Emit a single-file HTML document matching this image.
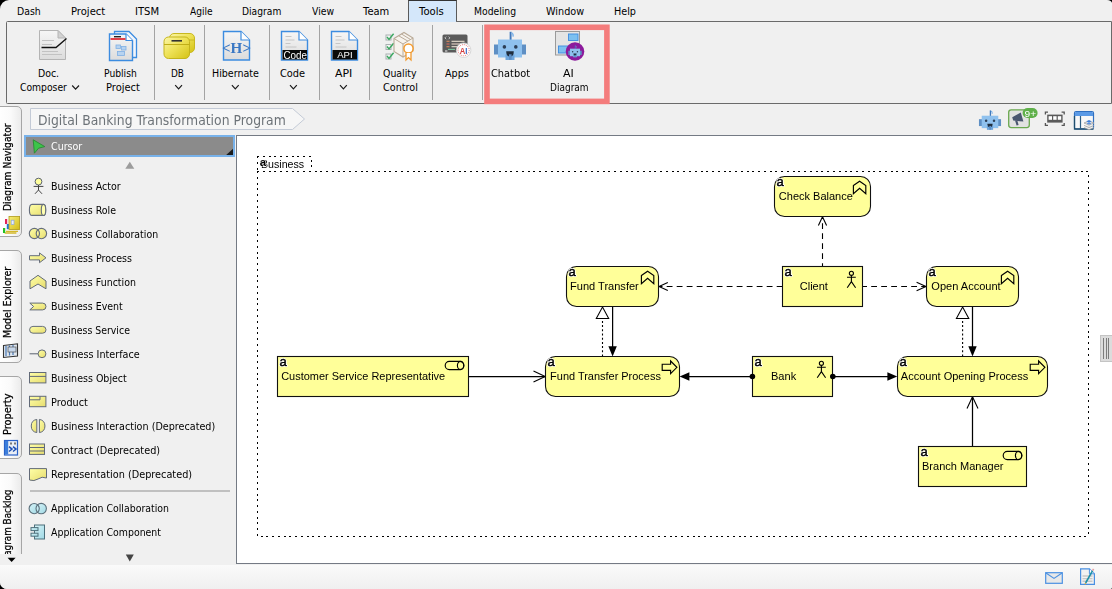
<!DOCTYPE html>
<html>
<head>
<meta charset="utf-8">
<title>Digital Banking Transformation Program</title>
<style>
html,body{margin:0;padding:0;background:#000;}
body{width:1112px;height:589px;overflow:hidden;font-family:"Liberation Sans",sans-serif;}
#root{position:relative;width:1112px;height:589px;background:#f0f0f0;overflow:hidden;border-radius:9px 5px 2px 7px / 9px 3px 2px 7px;}
.abs{position:absolute;}
svg{position:absolute;overflow:visible;transform:translateZ(0);}
svg text{font-family:"Liberation Sans",sans-serif;}
</style>
</head>
<body>
<div id="root">
<div class="abs" style="left:408px;top:0px;width:49px;height:22px;background:#d4e7fa;border:1px solid #5a5a5a;border-top:1px solid #333;border-bottom:none;box-sizing:border-box;"></div>
<span style="position:absolute;left:17.30px;top:5.20px;line-height:14px;height:14px;white-space:nowrap;font-family:'DejaVu Sans','Liberation Sans',sans-serif;font-size:11px;color:#000;transform:scaleX(0.8488);transform-origin:0 50%;">Dash</span>
<span style="position:absolute;left:71.20px;top:5.20px;line-height:14px;height:14px;white-space:nowrap;font-family:'DejaVu Sans','Liberation Sans',sans-serif;font-size:11px;color:#000;transform:scaleX(0.9086);transform-origin:0 50%;">Project</span>
<span style="position:absolute;left:135.30px;top:5.20px;line-height:14px;height:14px;white-space:nowrap;font-family:'DejaVu Sans','Liberation Sans',sans-serif;font-size:11px;color:#000;transform:scaleX(0.9116);transform-origin:0 50%;">ITSM</span>
<span style="position:absolute;left:189.60px;top:5.20px;line-height:14px;height:14px;white-space:nowrap;font-family:'DejaVu Sans','Liberation Sans',sans-serif;font-size:11px;color:#000;transform:scaleX(0.8251);transform-origin:0 50%;">Agile</span>
<span style="position:absolute;left:242.00px;top:5.20px;line-height:14px;height:14px;white-space:nowrap;font-family:'DejaVu Sans','Liberation Sans',sans-serif;font-size:11px;color:#000;transform:scaleX(0.8320);transform-origin:0 50%;">Diagram</span>
<span style="position:absolute;left:311.50px;top:5.20px;line-height:14px;height:14px;white-space:nowrap;font-family:'DejaVu Sans','Liberation Sans',sans-serif;font-size:11px;color:#000;transform:scaleX(0.8426);transform-origin:0 50%;">View</span>
<span style="position:absolute;left:363.30px;top:5.20px;line-height:14px;height:14px;white-space:nowrap;font-family:'DejaVu Sans','Liberation Sans',sans-serif;font-size:11px;color:#000;transform:scaleX(0.9045);transform-origin:0 50%;">Team</span>
<span style="position:absolute;left:419.40px;top:5.20px;line-height:14px;height:14px;white-space:nowrap;font-family:'DejaVu Sans','Liberation Sans',sans-serif;font-size:11px;color:#000;transform:scaleX(0.9148);transform-origin:0 50%;">Tools</span>
<span style="position:absolute;left:474.10px;top:5.20px;line-height:14px;height:14px;white-space:nowrap;font-family:'DejaVu Sans','Liberation Sans',sans-serif;font-size:11px;color:#000;transform:scaleX(0.8412);transform-origin:0 50%;">Modeling</span>
<span style="position:absolute;left:546.40px;top:5.20px;line-height:14px;height:14px;white-space:nowrap;font-family:'DejaVu Sans','Liberation Sans',sans-serif;font-size:11px;color:#000;transform:scaleX(0.8784);transform-origin:0 50%;">Window</span>
<span style="position:absolute;left:614.00px;top:5.20px;line-height:14px;height:14px;white-space:nowrap;font-family:'DejaVu Sans','Liberation Sans',sans-serif;font-size:11px;color:#000;transform:scaleX(0.8773);transform-origin:0 50%;">Help</span>
<div class="abs" style="left:6px;top:21px;width:1106px;height:83px;border:1px solid #6a6a6a;box-sizing:border-box;border-radius:1.5px 0 0 1.5px;"></div>
<div class="abs" style="left:409px;top:21px;width:47px;height:1px;background:#d4e7fa;"></div>
<div class="abs" style="left:154px;top:25px;width:1px;height:75px;background:#a3a3a3;"></div>
<div class="abs" style="left:204px;top:25px;width:1px;height:75px;background:#a3a3a3;"></div>
<div class="abs" style="left:269px;top:25px;width:1px;height:75px;background:#a3a3a3;"></div>
<div class="abs" style="left:319px;top:25px;width:1px;height:75px;background:#a3a3a3;"></div>
<div class="abs" style="left:369px;top:25px;width:1px;height:75px;background:#a3a3a3;"></div>
<div class="abs" style="left:432px;top:25px;width:1px;height:75px;background:#a3a3a3;"></div>
<div class="abs" style="left:482px;top:25px;width:1px;height:75px;background:#a3a3a3;"></div>
<svg width="140" height="90" viewBox="480 20 140 90" style="left:480px;top:20px"><rect x="487" y="27.3" width="119.9" height="74.1" fill="none" stroke="#f47c7c" stroke-width="5.6"/></svg>
<span style="position:absolute;left:38.20px;top:67.00px;line-height:14px;height:14px;white-space:nowrap;font-family:'DejaVu Sans','Liberation Sans',sans-serif;font-size:11px;color:#000;transform:scaleX(0.8525);transform-origin:0 50%;">Doc.</span>
<span style="position:absolute;left:19.90px;top:81.00px;line-height:14px;height:14px;white-space:nowrap;font-family:'DejaVu Sans','Liberation Sans',sans-serif;font-size:11px;color:#000;transform:scaleX(0.8396);transform-origin:0 50%;">Composer</span>
<span style="position:absolute;left:104.40px;top:67.00px;line-height:14px;height:14px;white-space:nowrap;font-family:'DejaVu Sans','Liberation Sans',sans-serif;font-size:11px;color:#000;transform:scaleX(0.8363);transform-origin:0 50%;">Publish</span>
<span style="position:absolute;left:105.50px;top:81.00px;line-height:14px;height:14px;white-space:nowrap;font-family:'DejaVu Sans','Liberation Sans',sans-serif;font-size:11px;color:#000;transform:scaleX(0.9006);transform-origin:0 50%;">Project</span>
<span style="position:absolute;left:171.40px;top:67.00px;line-height:14px;height:14px;white-space:nowrap;font-family:'DejaVu Sans','Liberation Sans',sans-serif;font-size:11px;color:#000;transform:scaleX(0.8109);transform-origin:0 50%;">DB</span>
<span style="position:absolute;left:212.40px;top:67.00px;line-height:14px;height:14px;white-space:nowrap;font-family:'DejaVu Sans','Liberation Sans',sans-serif;font-size:11px;color:#000;transform:scaleX(0.8653);transform-origin:0 50%;">Hibernate</span>
<span style="position:absolute;left:280.40px;top:67.00px;line-height:14px;height:14px;white-space:nowrap;font-family:'DejaVu Sans','Liberation Sans',sans-serif;font-size:11px;color:#000;transform:scaleX(0.8910);transform-origin:0 50%;">Code</span>
<span style="position:absolute;left:334.50px;top:67.00px;line-height:14px;height:14px;white-space:nowrap;font-family:'DejaVu Sans','Liberation Sans',sans-serif;font-size:11px;color:#000;transform:scaleX(0.9939);transform-origin:0 50%;">API</span>
<span style="position:absolute;left:382.70px;top:67.00px;line-height:14px;height:14px;white-space:nowrap;font-family:'DejaVu Sans','Liberation Sans',sans-serif;font-size:11px;color:#000;transform:scaleX(0.8547);transform-origin:0 50%;">Quality</span>
<span style="position:absolute;left:382.70px;top:81.00px;line-height:14px;height:14px;white-space:nowrap;font-family:'DejaVu Sans','Liberation Sans',sans-serif;font-size:11px;color:#000;transform:scaleX(0.8776);transform-origin:0 50%;">Control</span>
<span style="position:absolute;left:444.80px;top:67.00px;line-height:14px;height:14px;white-space:nowrap;font-family:'DejaVu Sans','Liberation Sans',sans-serif;font-size:11px;color:#000;transform:scaleX(0.8739);transform-origin:0 50%;">Apps</span>
<span style="position:absolute;left:490.70px;top:67.00px;line-height:14px;height:14px;white-space:nowrap;font-family:'DejaVu Sans','Liberation Sans',sans-serif;font-size:11px;color:#000;transform:scaleX(0.8917);transform-origin:0 50%;">Chatbot</span>
<span style="position:absolute;left:563.00px;top:67.00px;line-height:14px;height:14px;white-space:nowrap;font-family:'DejaVu Sans','Liberation Sans',sans-serif;font-size:11px;color:#000;transform:scaleX(1.0017);transform-origin:0 50%;">AI</span>
<span style="position:absolute;left:550.40px;top:81.00px;line-height:14px;height:14px;white-space:nowrap;font-family:'DejaVu Sans','Liberation Sans',sans-serif;font-size:11px;color:#000;transform:scaleX(0.8172);transform-origin:0 50%;">Diagram</span>
<svg width="1112" height="135" viewBox="0 0 1112 135" style="left:0;top:0">
<defs>
<linearGradient id="gPage" x1="0" y1="0" x2="0" y2="1"><stop offset="0" stop-color="#f6f6f6"/><stop offset="1" stop-color="#dcdcdc"/></linearGradient>
<linearGradient id="gDb" x1="0" y1="0" x2="1" y2="1"><stop offset="0" stop-color="#fbf6a8"/><stop offset=".45" stop-color="#efe35a"/><stop offset="1" stop-color="#d4c214"/></linearGradient>
<linearGradient id="gY" x1="0" y1="0" x2="1" y2="1"><stop offset="0" stop-color="#ffffa8"/><stop offset="1" stop-color="#e6dc6e"/></linearGradient>
<linearGradient id="gC" x1="0" y1="0" x2="1" y2="1"><stop offset="0" stop-color="#d8f4f8"/><stop offset="1" stop-color="#9fd8e4"/></linearGradient>
</defs>
<polyline points="72.19999999999999,85.5 75.6,89.1 79.0,85.5" fill="none" stroke="#1a1a1a" stroke-width="1.2"/>
<polyline points="175.2,85.2 178.6,88.8 182.0,85.2" fill="none" stroke="#1a1a1a" stroke-width="1.2"/>
<polyline points="231.9,85.2 235.3,88.8 238.70000000000002,85.2" fill="none" stroke="#1a1a1a" stroke-width="1.2"/>
<polyline points="290.0,85.2 293.4,88.8 296.79999999999995,85.2" fill="none" stroke="#1a1a1a" stroke-width="1.2"/>
<polyline points="340.0,85.2 343.4,88.8 346.79999999999995,85.2" fill="none" stroke="#1a1a1a" stroke-width="1.2"/>
<g>
<path d="M39.5,30.5 H58 L65.5,38 V59.5 H39.5 Z" fill="url(#gPage)" stroke="#b4b4b4"/>
<path d="M58,30.5 V38 H65.5 Z" fill="#d2d2d2" stroke="#b4b4b4"/>
<path d="M42,40.5 H54 M42,44.5 H52 M42,51.5 H58 M42,54.5 H62" stroke="#c2c2c2" stroke-width="1" fill="none"/>
<path d="M41.5,47.5 H56 L66.5,38.5" stroke="#111" stroke-width="1.4" fill="none"/>
</g>
<g>
<path d="M114.5,31.5 H129 L136.5,39 V57.5 H114.5 Z" fill="#f3f6fb" stroke="#3c8ce0" stroke-width="1.3"/>
<path d="M109.5,34 H126 L132.5,40.5 V60.5 H109.5 Z" fill="url(#gPage)" stroke="#3c8ce0" stroke-width="1.4"/>
<path d="M126,34 V40.5 H132.5" fill="#fff" stroke="#3c8ce0" stroke-width="1.2"/>
<rect x="110.5" y="38" width="15" height="2" fill="#e0414b"/>
<rect x="114" y="36" width="7" height="1.4" fill="#222"/>
<rect x="116" y="45" width="4.5" height="3.5" fill="#b7d3f0" stroke="#7fb0e4" stroke-width=".8"/>
<rect x="121.5" y="46.5" width="4.5" height="3.5" fill="#b7d3f0" stroke="#7fb0e4" stroke-width=".8"/>
<rect x="117.5" y="51.5" width="7" height="4" fill="#b7d3f0" stroke="#7fb0e4" stroke-width=".8"/>
</g>
<g>
<rect x="169.5" y="33.5" width="25" height="19" rx="4.5" fill="url(#gDb)" stroke="#c8b820"/>
<path d="M169.5,40 H194.5" stroke="#c8b820"/>
<rect x="164" y="37" width="25.5" height="21.5" rx="4.5" fill="url(#gDb)" stroke="#c4b41c"/>
<path d="M164,44.5 H189.5" stroke="#c0ae18"/>
<rect x="171.5" y="40" width="10.5" height="1.6" fill="#333"/>
</g>
<g>
<path d="M223.5,31.5 H241 L249.5,40 V60 H223.5 Z" fill="url(#gPage)" stroke="#3c8ce0" stroke-width="1.4"/>
<path d="M241,31.5 V40 H249.5" fill="#fff" stroke="#3c8ce0" stroke-width="1.2"/>
<text x="236.5" y="52.8" text-anchor="middle" font-size="15" font-weight="bold" fill="#3b78c4" style="font-family:'Liberation Serif',serif" textLength="29" lengthAdjust="spacingAndGlyphs">&lt;H&gt;</text>
</g>
<g>
<path d="M281.5,31.5 H299.0 L307.5,40 V60 H281.5 Z" fill="url(#gPage)" stroke="#3c8ce0" stroke-width="1.4"/>
<path d="M299.0,31.5 V40 H307.5" fill="#fff" stroke="#3c8ce0" stroke-width="1.2"/>
<path d="M285.5,36.5 H291.5 M285.5,40 H294.5 M285.5,43.5 H290.5 M285.5,47 H296.5" stroke="#c6c6c6" fill="none"/>
<rect x="282.5" y="50" width="24.5" height="9.5" fill="#0a0a0a"/>
<text x="283.4" y="58.6" font-size="10.5" fill="#fff" textLength="23.6" lengthAdjust="spacingAndGlyphs">Code</text>
</g>
<g>
<path d="M331.5,31.5 H349.0 L357.5,40 V60 H331.5 Z" fill="url(#gPage)" stroke="#3c8ce0" stroke-width="1.4"/>
<path d="M349.0,31.5 V40 H357.5" fill="#fff" stroke="#3c8ce0" stroke-width="1.2"/>
<path d="M335.5,36.5 H341.5 M335.5,40 H344.5 M335.5,43.5 H340.5 M335.5,47 H346.5" stroke="#c6c6c6" fill="none"/>
<rect x="332.5" y="50" width="24.5" height="9.5" fill="#0a0a0a"/>
<text x="337.2" y="58.2" font-size="9.5" fill="#fff" textLength="15.4" lengthAdjust="spacingAndGlyphs">API</text>
</g>
<g>
<g fill="#f4f4f4" stroke="#a8b0b0" stroke-width="1"><rect x="386" y="35" width="5" height="5"/><rect x="386" y="44.5" width="5" height="5"/><rect x="386" y="54" width="5" height="5"/></g>
<g fill="none" stroke="#3aa860" stroke-width="1.4"><path d="M387,37 l2,2.4 l4.6,-5.6"/><path d="M387,46.5 l2,2.4 l4.6,-5.6"/><path d="M387,56 l2,2.4 l4.6,-5.6"/></g>
<path d="M394,38.5 L404,32.5 L413,38 V51 L403,57 L394,51.5 Z" fill="#f7f3ee" stroke="#b9aa98" stroke-width="1.1"/>
<path d="M394,38.5 L403,44 L413,38 M403,44 V57 M398.5,35.7 L408,41.2 M401.5,34 L410.5,39.5" fill="none" stroke="#b9aa98" stroke-width="1"/>
<circle cx="408.5" cy="48.5" r="4.6" fill="#fff" stroke="#f29a2e" stroke-width="1.5"/>
<path d="M406,53 V60 L408.5,57.6 L411,60 V53" fill="#fff" stroke="#f29a2e" stroke-width="1.3"/>
</g>
<g>
<rect x="442.5" y="34.5" width="25" height="18" rx="1.5" fill="#5a5a5a"/>
<path d="M446.2,36.6 l-1.3,1.3 l1.3,1.3 M448.6,36.6 l1.3,1.3 l-1.3,1.3" stroke="#eee" stroke-width=".7" fill="none"/>
<path d="M446.5,41.3 h3" stroke="#d98a5c" stroke-width="1.1"/><path d="M451.5,41.3 h13" stroke="#e9dfd0" stroke-width="1.1"/>
<path d="M446.5,44 h3" stroke="#d9665c" stroke-width="1.1"/><path d="M451.5,44 h11" stroke="#e9d6c8" stroke-width="1.1"/>
<path d="M446.5,46.7 h3" stroke="#d98a5c" stroke-width="1.1"/><path d="M451.5,46.7 h8" stroke="#e9dfd0" stroke-width="1.1"/>
<path d="M448,49.4 h7" stroke="#7cc8a0" stroke-width="1.1"/>
<path d="M445,51 h2.4" stroke="#eee" stroke-width="1"/>
<circle cx="463.6" cy="50.2" r="7.3" fill="#fff" stroke="#cfcfcf" stroke-width=".8"/>
<circle cx="463.6" cy="50.2" r="5.6" fill="none" stroke="#e05050" stroke-width=".8" stroke-dasharray="1 1"/>
<text x="463.6" y="53.5" text-anchor="middle" font-size="8.6" font-weight="bold" textLength="7.6" lengthAdjust="spacingAndGlyphs"><tspan fill="#d43c3c">A</tspan><tspan fill="#2c5fc4">I</tspan></text>
</g>
<g transform="translate(510,31.5) scale(1.0)"><path d="M0.6,0.3 V8.5" stroke="#3f78bc" stroke-width="1.9" fill="none"/><path d="M1.4,1.6 q2.2,0.4 1.6,3.6" stroke="#7db3e8" stroke-width="1.5" fill="none"/><rect x="-16" y="13" width="5" height="10" fill="#5e8fc4"/><rect x="11" y="13" width="5" height="10" fill="#5e8fc4"/><rect x="-12" y="8" width="24" height="18" fill="#8fc1ee"/><rect x="-4.5" y="23" width="9" height="5.5" fill="#6ea6dc"/><circle cx="-5.6" cy="15.4" r="1.8" fill="#2c3e55"/><circle cx="5.8" cy="15.4" r="1.8" fill="#2c3e55"/><path d="M-3.8,19.8 H3.8 Q3.8,25 0,25 Q-3.8,25 -3.8,19.8 Z" fill="#1f2d3d"/><rect x="-1" y="22.8" width="2.6" height="5.5" fill="#5e8fc4"/></g>
<g>
<rect x="555.5" y="31.5" width="24" height="23.5" fill="#e4e4e4" stroke="#9a9a9a"/>
<rect x="568.5" y="34" width="9.5" height="6.5" fill="#7cc0f0" stroke="#3c8ce0" stroke-width=".9"/>
<rect x="558.5" y="46" width="9.5" height="7" fill="#7cc0f0" stroke="#3c8ce0" stroke-width=".9"/>
<circle cx="575" cy="51.5" r="9.3" fill="#8c1a9c"/>
</g>
<g transform="translate(575,45.3) scale(0.42)"><path d="M0.6,0.3 V8.5" stroke="#3f78bc" stroke-width="1.9" fill="none"/><path d="M1.4,1.6 q2.2,0.4 1.6,3.6" stroke="#7db3e8" stroke-width="1.5" fill="none"/><rect x="-16" y="13" width="5" height="10" fill="#5e8fc4"/><rect x="11" y="13" width="5" height="10" fill="#5e8fc4"/><rect x="-12" y="8" width="24" height="18" fill="#8fc1ee"/><rect x="-4.5" y="23" width="9" height="5.5" fill="#6ea6dc"/><circle cx="-5.6" cy="15.4" r="1.8" fill="#2c3e55"/><circle cx="5.8" cy="15.4" r="1.8" fill="#2c3e55"/><path d="M-3.8,19.8 H3.8 Q3.8,25 0,25 Q-3.8,25 -3.8,19.8 Z" fill="#1f2d3d"/><rect x="-1" y="22.8" width="2.6" height="5.5" fill="#5e8fc4"/></g>
<g transform="translate(990,110.2) scale(0.69)"><path d="M0.6,0.3 V8.5" stroke="#3f78bc" stroke-width="1.9" fill="none"/><path d="M1.4,1.6 q2.2,0.4 1.6,3.6" stroke="#7db3e8" stroke-width="1.5" fill="none"/><rect x="-16" y="13" width="5" height="10" fill="#5e8fc4"/><rect x="11" y="13" width="5" height="10" fill="#5e8fc4"/><rect x="-12" y="8" width="24" height="18" fill="#8fc1ee"/><rect x="-4.5" y="23" width="9" height="5.5" fill="#6ea6dc"/><circle cx="-5.6" cy="15.4" r="1.8" fill="#2c3e55"/><circle cx="5.8" cy="15.4" r="1.8" fill="#2c3e55"/><path d="M-3.8,19.8 H3.8 Q3.8,25 0,25 Q-3.8,25 -3.8,19.8 Z" fill="#1f2d3d"/><rect x="-1" y="22.8" width="2.6" height="5.5" fill="#5e8fc4"/></g>
<g>
<rect x="1008.7" y="109.8" width="20.6" height="17.8" rx="2.5" fill="#e2e2e2" stroke="#6aa84f" stroke-width="1.3"/>
<path d="M1012.2,117.3 L1020.8,112.4 L1023.4,121.6 L1013.2,120.4 Z" fill="#4a5670"/>
<path d="M1015,120.6 L1016.6,125.6 L1018.6,125 L1017.4,120.8 Z" fill="#4a5670"/>
<rect x="1022.6" y="108" width="15" height="10" rx="5" fill="#5fb04a"/>
<text x="1030.3" y="116.5" text-anchor="middle" font-size="8.6" fill="#fff" textLength="11.6" lengthAdjust="spacingAndGlyphs">9+</text>
</g>
<g fill="none" stroke="#555" stroke-width="1.3">
<path d="M1045.4,114.5 V112.2 H1048 M1061.6,112.2 H1064.2 V114.5 M1064.2,123 V125.4 H1061.6 M1048,125.4 H1045.4 V123"/>
<rect x="1047.2" y="114.6" width="15.4" height="8" fill="#5a5a5a" stroke="none"/>
<g fill="#fff" stroke="none"><rect x="1048.6" y="116.2" width="3.4" height="3.6"/><rect x="1053.2" y="116.2" width="3.4" height="3.6"/><rect x="1057.8" y="116.2" width="3.4" height="3.6"/></g>
</g>
<g>
<rect x="1074.5" y="111.5" width="19" height="17.5" rx="1.5" fill="#f8f8f8" stroke="#2f6fc0" stroke-width="1.2"/>
<path d="M1075,116 V113 Q1075,112 1076,112 H1092 Q1093,112 1093,113 V116 Z" fill="#5b9ae6"/>
<path d="M1074.5,116 V129 H1093.5" fill="none" stroke="#1f4e6e" stroke-width="1.3"/>
<path d="M1080.5,116 V129" stroke="#2f5f86" stroke-width="1.2"/>
<path d="M1084,123 l5,-2.2 l5,2.2 l-5,2.2 z M1084,125.4 l5,2.2 l5,-2.2 M1084,127.6 l5,2.2 l5,-2.2" fill="#e8e8e8" stroke="#9a9a9a" stroke-width=".7"/>
<path d="M1086.8,121.4 l2.2,-1 l2.2,1 l-2.2,1 z M1086.8,123.2 l2.2,1 l2.2,-1" fill="#3c7edc" stroke="#3c7edc" stroke-width=".6"/>
</g>
</svg>
<svg width="320" height="30" viewBox="0 105 320 30" style="left:0;top:105px">
<path d="M30.5,108.5 H292.5 L304.5,119 L292.5,129.5 H30.5 Z" fill="#f6f6f6" stroke="#c3cad6" stroke-width="1"/>
</svg>
<span style="position:absolute;left:37.60px;top:111.00px;line-height:18px;height:18px;white-space:nowrap;font-family:'DejaVu Sans','Liberation Sans',sans-serif;font-size:14px;color:#6d7378;transform:scaleX(0.8860);transform-origin:0 50%;">Digital Banking Transformation Program</span>
<div class="abs" style="left:0;top:100px;width:24px;height:454px;overflow:hidden;">
<div class="abs" style="left:-3px;top:6px;width:25px;height:131px;box-sizing:border-box;border:1px solid #a6a6a6;border-radius:0 5px 5px 0;background:linear-gradient(90deg,#ffffff,#fafafa 55%,#ebebeb);"></div>
<div class="abs" style="left:-3px;top:150px;width:25px;height:113px;box-sizing:border-box;border:1px solid #a6a6a6;border-radius:0 5px 5px 0;background:linear-gradient(90deg,#ffffff,#fafafa 55%,#ebebeb);"></div>
<div class="abs" style="left:-3px;top:276px;width:25px;height:83.39999999999998px;box-sizing:border-box;border:1px solid #a6a6a6;border-radius:0 5px 5px 0;background:linear-gradient(90deg,#ffffff,#fafafa 55%,#ebebeb);"></div>
<div class="abs" style="left:-3px;top:373px;width:25px;height:127px;box-sizing:border-box;border:1px solid #a6a6a6;border-radius:0 5px 5px 0;background:linear-gradient(90deg,#ffffff,#fafafa 55%,#ebebeb);"></div>
<span style="position:absolute;left:1.40px;top:111.00px;line-height:14px;height:14px;white-space:nowrap;font-family:'DejaVu Sans','Liberation Sans',sans-serif;font-size:11px;color:#000;transform:rotate(-90deg) scaleX(0.8378);transform-origin:0 0;-webkit-text-stroke:0.25px #000;">Diagram Navigator</span>
<span style="position:absolute;left:1.40px;top:238.20px;line-height:14px;height:14px;white-space:nowrap;font-family:'DejaVu Sans','Liberation Sans',sans-serif;font-size:11px;color:#000;transform:rotate(-90deg) scaleX(0.8648);transform-origin:0 0;-webkit-text-stroke:0.25px #000;">Model Explorer</span>
<span style="position:absolute;left:1.40px;top:334.50px;line-height:14px;height:14px;white-space:nowrap;font-family:'DejaVu Sans','Liberation Sans',sans-serif;font-size:11px;color:#000;transform:rotate(-90deg) scaleX(0.8916);transform-origin:0 0;-webkit-text-stroke:0.25px #000;">Property</span>
<span style="position:absolute;left:1.40px;top:465.00px;line-height:14px;height:14px;white-space:nowrap;font-family:'DejaVu Sans','Liberation Sans',sans-serif;font-size:11px;color:#000;transform:rotate(-90deg) scaleX(0.8004);transform-origin:0 0;-webkit-text-stroke:0.25px #000;">Diagram Backlog</span>
<svg width="24" height="454" viewBox="0 100 24 454" style="left:0;top:0">
<defs><linearGradient id="gDb2" x1="0" y1="0" x2="1" y2="1"><stop offset="0" stop-color="#f6ee7a"/><stop offset="1" stop-color="#d4bc14"/></linearGradient></defs>
<g>
<path d="M6,231.4 H18 M4.6,233 H16.4" stroke="#d4b82a" stroke-width="1.3"/>
<rect x="5" y="219" width="2.2" height="5" fill="#e0245a"/>
<rect x="6.8" y="224" width="2.2" height="5.2" fill="#1a78d8"/>
<rect x="3" y="228" width="2.2" height="5" fill="#22c022"/>
<rect x="9" y="216.4" width="10.6" height="13.2" fill="url(#gDb2)" stroke="#b09a1c" stroke-width=".8"/>
<rect x="11.2" y="220.2" width="2.8" height="4.4" fill="#e8eefc" stroke="#8aa4d8" stroke-width=".7"/>
</g>
<g><path d="M3.5,345.5 L17.5,343.8 V356 L3.5,357.5 Z" fill="#dfe6ee" stroke="#333" stroke-width="1.1"/><path d="M6,346 V356 M9.5,345.5 V355.5 M13,345 V355" stroke="#4a78b4" stroke-width="1.2"/><rect x="8" y="347" width="8" height="5" fill="#c6d6ea" stroke="#555" stroke-width=".7"/></g>
<g><rect x="4.5" y="440.5" width="13" height="14.5" fill="#e9eef6" stroke="#2a62c8" stroke-width="1.2"/><rect x="5" y="441" width="3.2" height="13.5" fill="#3c7edc"/><path d="M9,451.5 l3,-2.4 l-3,-2.4 M13,451.5 l3,-2.4 l-3,-2.4" fill="none" stroke="#1e50b4" stroke-width="1.5"/><path d="M10,443.5 h2 M14,443.5 h2" stroke="#777" stroke-width="2"/></g>
</svg>
</div>
<svg width="12" height="8" viewBox="0 0 12 8" style="left:6px;top:556px"><path d="M1.6,1.8 H9.6 L5.6,5.9 Z" fill="#000"/></svg>
<div class="abs" style="left:24px;top:135px;width:211px;height:22px;box-sizing:border-box;border:2px solid #78b2ea;background:#8b8b8b;"></div>
<svg width="12" height="10" viewBox="222 146 12 10" style="left:222px;top:146px"><path d="M233,148.8 V155 H226.2 Z" fill="#1c1c1c"/></svg>
<span style="position:absolute;left:51.20px;top:140.20px;line-height:14px;height:14px;white-space:nowrap;font-family:'DejaVu Sans','Liberation Sans',sans-serif;font-size:11px;color:#fff;transform:scaleX(0.8653);transform-origin:0 50%;">Cursor</span>
<span style="position:absolute;left:51.10px;top:180.20px;line-height:14px;height:14px;white-space:nowrap;font-family:'DejaVu Sans','Liberation Sans',sans-serif;font-size:11px;color:#000;transform:scaleX(0.8610);transform-origin:0 50%;">Business Actor</span>
<span style="position:absolute;left:51.10px;top:204.20px;line-height:14px;height:14px;white-space:nowrap;font-family:'DejaVu Sans','Liberation Sans',sans-serif;font-size:11px;color:#000;transform:scaleX(0.8584);transform-origin:0 50%;">Business Role</span>
<span style="position:absolute;left:51.10px;top:228.20px;line-height:14px;height:14px;white-space:nowrap;font-family:'DejaVu Sans','Liberation Sans',sans-serif;font-size:11px;color:#000;transform:scaleX(0.8546);transform-origin:0 50%;">Business Collaboration</span>
<span style="position:absolute;left:51.10px;top:252.20px;line-height:14px;height:14px;white-space:nowrap;font-family:'DejaVu Sans','Liberation Sans',sans-serif;font-size:11px;color:#000;transform:scaleX(0.8631);transform-origin:0 50%;">Business Process</span>
<span style="position:absolute;left:51.10px;top:276.20px;line-height:14px;height:14px;white-space:nowrap;font-family:'DejaVu Sans','Liberation Sans',sans-serif;font-size:11px;color:#000;transform:scaleX(0.8604);transform-origin:0 50%;">Business Function</span>
<span style="position:absolute;left:51.10px;top:300.20px;line-height:14px;height:14px;white-space:nowrap;font-family:'DejaVu Sans','Liberation Sans',sans-serif;font-size:11px;color:#000;transform:scaleX(0.8597);transform-origin:0 50%;">Business Event</span>
<span style="position:absolute;left:51.10px;top:324.20px;line-height:14px;height:14px;white-space:nowrap;font-family:'DejaVu Sans','Liberation Sans',sans-serif;font-size:11px;color:#000;transform:scaleX(0.8514);transform-origin:0 50%;">Business Service</span>
<span style="position:absolute;left:51.10px;top:348.20px;line-height:14px;height:14px;white-space:nowrap;font-family:'DejaVu Sans','Liberation Sans',sans-serif;font-size:11px;color:#000;transform:scaleX(0.8759);transform-origin:0 50%;">Business Interface</span>
<span style="position:absolute;left:51.10px;top:372.20px;line-height:14px;height:14px;white-space:nowrap;font-family:'DejaVu Sans','Liberation Sans',sans-serif;font-size:11px;color:#000;transform:scaleX(0.8630);transform-origin:0 50%;">Business Object</span>
<span style="position:absolute;left:51.10px;top:396.20px;line-height:14px;height:14px;white-space:nowrap;font-family:'DejaVu Sans','Liberation Sans',sans-serif;font-size:11px;color:#000;transform:scaleX(0.8811);transform-origin:0 50%;">Product</span>
<span style="position:absolute;left:51.10px;top:420.20px;line-height:14px;height:14px;white-space:nowrap;font-family:'DejaVu Sans','Liberation Sans',sans-serif;font-size:11px;color:#000;transform:scaleX(0.8739);transform-origin:0 50%;">Business Interaction (Deprecated)</span>
<span style="position:absolute;left:51.10px;top:444.20px;line-height:14px;height:14px;white-space:nowrap;font-family:'DejaVu Sans','Liberation Sans',sans-serif;font-size:11px;color:#000;transform:scaleX(0.8832);transform-origin:0 50%;">Contract (Deprecated)</span>
<span style="position:absolute;left:51.10px;top:468.20px;line-height:14px;height:14px;white-space:nowrap;font-family:'DejaVu Sans','Liberation Sans',sans-serif;font-size:11px;color:#000;transform:scaleX(0.8833);transform-origin:0 50%;">Representation (Deprecated)</span>
<span style="position:absolute;left:51.10px;top:502.20px;line-height:14px;height:14px;white-space:nowrap;font-family:'DejaVu Sans','Liberation Sans',sans-serif;font-size:11px;color:#000;transform:scaleX(0.8533);transform-origin:0 50%;">Application Collaboration</span>
<span style="position:absolute;left:51.10px;top:526.20px;line-height:14px;height:14px;white-space:nowrap;font-family:'DejaVu Sans','Liberation Sans',sans-serif;font-size:11px;color:#000;transform:scaleX(0.8539);transform-origin:0 50%;">Application Component</span>
<div class="abs" style="left:30px;top:490px;width:200px;height:2px;background:#c0c0c0;"></div>
<svg width="236" height="430" viewBox="0 135 236 430" style="left:0;top:135px">
<path d="M33.2,139.8 L44.8,146.6 L38.6,148.2 L34.4,153.2 Z" fill="#3cc44a" stroke="#2a8a34" stroke-width=".9"/>
<path d="M125.3,168.8 L129.8,161.8 L134.3,168.8 Z" fill="#9c9c9c"/>
<path d="M125.8,554.6 H133.8 L129.8,561.6 Z" fill="#444"/>
<g stroke="#5a6270" stroke-width="1" fill="none"><circle cx="38.5" cy="181.6" r="3.4" fill="#ffff9c"/><path d="M38.5,185 V190 M33.6,186.4 H43.4 M38.5,190 L35,193.8 M38.5,190 L42,193.8" stroke="#444"/></g>
<g stroke="#666e7c" stroke-width="1.1"><path d="M32,204.4 H43.5 a2.2,5.5 0 0 1 0,11 H32 a2.6,5.5 0 0 1 0,-11 Z" fill="url(#gY)"/><ellipse cx="43.5" cy="209.9" rx="2.2" ry="5.5" fill="#ffffb0"/></g>
<g stroke="none" fill="url(#gY)"><circle cx="34.4" cy="233.5" r="5.1"/><circle cx="41.4" cy="233.5" r="5.2"/></g><g stroke="#666e7c" stroke-width="1.15" fill="none"><circle cx="34.4" cy="233.5" r="5.1"/><circle cx="41.4" cy="233.5" r="5.2"/></g>
<path d="M29.5,255.7 H39.5 V252.9 L46,257.8 L39.5,262.7 V259.9 H29.5 Z" fill="url(#gY)" stroke="#666e7c" stroke-width="1"/>
<path d="M30,281 L38,275.3 L46,281 V288.8 L38,284 L30,288.8 Z" fill="url(#gY)" stroke="#626a78" stroke-width="1"/>
<path d="M29.8,303.1 H42.6 a3.4,3.4 0 0 1 0,6.8 H29.8 L33.6,306.5 Z" fill="url(#gY)" stroke="#626a78" stroke-width="1"/>
<rect x="29.6" y="326.4" width="16.4" height="6.8" rx="3.4" fill="url(#gY)" stroke="#666e7c" stroke-width="1"/>
<path d="M29.6,353.8 H38" stroke="#5a6270" stroke-width="1"/><circle cx="42" cy="353.8" r="3.9" fill="url(#gY)" stroke="#626a78"/>
<rect x="29.5" y="372.5" width="16.4" height="10.4" fill="url(#gY)" stroke="#626a78"/><path d="M29.5,376.4 H46" stroke="#626a78"/>
<rect x="29.5" y="396.3" width="16.4" height="10.4" fill="url(#gY)" stroke="#626a78"/><path d="M29.5,399.8 H40 V396.3" stroke="#626a78" fill="none"/>
<path d="M36.8,419.4 V432.6 A6.7,6.7 0 0 1 36.8,419.4 Z" fill="url(#gY)" stroke="#626a78"/><path d="M39.4,419.4 A6.7,6.7 0 0 1 39.4,432.6 Z" fill="url(#gY)" stroke="#626a78"/>
<rect x="29.5" y="444" width="15" height="10.4" fill="url(#gY)" stroke="#626a78"/><path d="M29.5,447.5 H44.5 M29.5,451 H44.5" stroke="#626a78"/>
<path d="M29.5,468.6 H46.5 V478 Q42,476 38,479 Q34,481.6 29.5,480 Z" fill="url(#gY)" stroke="#626a78"/>
<g stroke="none" fill="url(#gC)"><circle cx="34.2" cy="508.6" r="5.1"/><circle cx="41.2" cy="508.6" r="5.2"/></g><g stroke="#5c707c" stroke-width="1.1" fill="none"><circle cx="34.2" cy="508.6" r="5.1"/><circle cx="41.2" cy="508.6" r="5.2"/></g>
<g stroke="#4c6e7a" stroke-width="1" fill="url(#gC)"><rect x="34.5" y="525" width="10" height="14"/><rect x="31" y="527.6" width="7" height="3"/><rect x="31" y="533.2" width="7" height="3"/></g>
</svg>
<div class="abs" style="left:236px;top:135px;width:880px;height:429px;background:#fff;border:1px solid #747a84;box-sizing:border-box;"></div>
<div class="abs" style="left:1100px;top:335px;width:14px;height:26.5px;background:#dcdcdc;border:1px solid #c4c4c4;box-sizing:border-box;"></div>
<div class="abs" style="left:1103px;top:338px;width:1px;height:21px;background:#7c7c7c;"></div>
<div class="abs" style="left:1106px;top:338px;width:1px;height:21px;background:#7c7c7c;"></div>
<div class="abs" style="left:1108.4px;top:338px;width:1px;height:21px;background:#7c7c7c;"></div>
<div class="abs" style="left:0;top:564.5px;width:1112px;height:25px;background:linear-gradient(180deg,#fafafa,#f5f5f5 45%,#efefef);"></div>
<svg width="70" height="25" viewBox="1040 564 70 25" style="left:1040px;top:564px">
<rect x="1045.7" y="572.7" width="16.6" height="10.6" fill="#e8e8e8" stroke="#4a90e2" stroke-width="1.2"/>
<path d="M1046,573 L1054,578.4 L1062,573" fill="none" stroke="#4a90e2" stroke-width="1.1"/>
<path d="M1080.6,568.8 H1089.4 L1094.4,573.8 V584.4 H1080.6 Z" fill="#f2f2f2" stroke="#4a90e2" stroke-width="1.2"/>
<path d="M1089.4,568.8 V573.8 H1094.4" fill="#fff" stroke="#4a90e2" stroke-width="1"/>
<path d="M1082.5,576 H1092.5 M1082.5,578.6 H1092.5 M1082.5,581.2 H1092.5" stroke="#c8c8c8" stroke-width="1.4"/>
<path d="M1085.6,583 L1092.6,570.6" stroke="#1e90a8" stroke-width="1.6"/><path d="M1092.6,570.6 l1,-1.8" stroke="#e8a0a0" stroke-width="1.6"/><path d="M1085.6,583 l-.5,1.2" stroke="#e0b040" stroke-width="1.4"/>
</svg>
<svg width="1112" height="589" viewBox="0 0 1112 589" style="left:0;top:0">
<g fill="none" stroke="#000" stroke-width="1" stroke-dasharray="2 3.76" shape-rendering="crispEdges">
<path d="M257,156.5 H311.5 V171"/>
<path d="M257.5,156 V171"/>
<path d="M257,171.5 H1088.5 V536.5"/>
<path d="M257.5,171 V536.5 H1088.5"/>
</g>
<path d="M822.5,266.5 V216.8" fill="none" stroke="#000" stroke-width="1.1" stroke-dasharray="5.8 4.2" stroke-dashoffset="2.5"/>
<path d="M818.4,225.4 L822.5,216.8 L826.6,225.4" fill="none" stroke="#000" stroke-width="1.1"/>
<path d="M782.5,286.5 H659" fill="none" stroke="#000" stroke-width="1.1" stroke-dasharray="5.8 4.2" stroke-dashoffset="0"/>
<path d="M667.8,282.4 L659,286.5 L667.8,290.6" fill="none" stroke="#000" stroke-width="1.1"/>
<path d="M862.5,286.5 H926" fill="none" stroke="#000" stroke-width="1.1" stroke-dasharray="5.8 4.2" stroke-dashoffset="1.3"/>
<path d="M916.6,282.3 L926,286.5 L916.6,290.7" fill="none" stroke="#000" stroke-width="1.1"/>
<path d="M602.5,356.5 V318.4" fill="none" stroke="#000" stroke-width="1.1" stroke-dasharray="2 2.2"/>
<path d="M602.5,307 L608.7,318.4 H596.3 Z" fill="#fff" stroke="#000" stroke-width="1.05"/>
<path d="M612.6,306.5 V350" fill="none" stroke="#000" stroke-width="1.25"/>
<path d="M612.6,356.6 L608.4,346.2 H616.8000000000001 Z" fill="#000"/>
<path d="M962.6,356.5 V318.4" fill="none" stroke="#000" stroke-width="1.1" stroke-dasharray="2 2.2"/>
<path d="M962.6,307 L968.8000000000001,318.4 H956.4 Z" fill="#fff" stroke="#000" stroke-width="1.05"/>
<path d="M972.5,306.5 V350" fill="none" stroke="#000" stroke-width="1.25"/>
<path d="M972.5,356.6 L968.3,346.2 H976.7 Z" fill="#000"/>
<path d="M468.5,376.5 H545" fill="none" stroke="#000" stroke-width="1.25"/>
<path d="M533.5,371 L545.2,376.5 L533.5,382" fill="none" stroke="#000" stroke-width="1.1"/>
<path d="M752.5,376.5 H686" fill="none" stroke="#000" stroke-width="1.25"/>
<path d="M679.6,376.5 L689.4,372.3 V380.7 Z" fill="#000"/>
<path d="M832.5,376.5 H890" fill="none" stroke="#000" stroke-width="1.25"/>
<path d="M897.2,376.5 L887.4,372.3 V380.7 Z" fill="#000"/>
<path d="M972.5,446.5 V397" fill="none" stroke="#000" stroke-width="1.25"/>
<path d="M967,408.4 L972.5,396.8 L978,408.4" fill="none" stroke="#000" stroke-width="1.1"/>
<rect x="774.5" y="176.5" width="96.0" height="40.0" rx="10" fill="#ffff99" stroke="#111" stroke-width="1.1"/>
<text x="776.5" y="186.1" font-size="13" fill="#fff" stroke="#fff" stroke-width="1.8" stroke-linejoin="round">a</text><text x="776.5" y="186.1" font-size="13" fill="#000" stroke="#000" stroke-width="0.45">a</text>
<text x="778.8" y="200.2" font-size="11" fill="#000" textLength="74.1" lengthAdjust="spacingAndGlyphs">Check Balance</text>
<path d="M853.4,185.5 L859.5999999999999,181.2 L865.8,185.5 V193.7 L859.5999999999999,188.29999999999998 L853.4,193.7 Z" fill="none" stroke="#000" stroke-width="1.15" stroke-linejoin="miter"/>
<rect x="566.5" y="266.5" width="92.0" height="40.0" rx="10" fill="#ffff99" stroke="#111" stroke-width="1.1"/>
<text x="568.5" y="276.1" font-size="13" fill="#fff" stroke="#fff" stroke-width="1.8" stroke-linejoin="round">a</text><text x="568.5" y="276.1" font-size="13" fill="#000" stroke="#000" stroke-width="0.45">a</text>
<text x="570.0" y="290.2" font-size="11" fill="#000" textLength="68.8" lengthAdjust="spacingAndGlyphs">Fund Transfer</text>
<path d="M641.4,275.5 L647.5999999999999,271.2 L653.8,275.5 V283.7 L647.5999999999999,278.3 L641.4,283.7 Z" fill="none" stroke="#000" stroke-width="1.15" stroke-linejoin="miter"/>
<rect x="782.5" y="266.5" width="80.0" height="40.0" rx="0" fill="#ffff99" stroke="#111" stroke-width="1.1"/>
<text x="784.5" y="276.1" font-size="13" fill="#fff" stroke="#fff" stroke-width="1.8" stroke-linejoin="round">a</text><text x="784.5" y="276.1" font-size="13" fill="#000" stroke="#000" stroke-width="0.45">a</text>
<text x="799.8" y="290.2" font-size="11" fill="#000" textLength="28.1" lengthAdjust="spacingAndGlyphs">Client</text>
<g fill="none" stroke="#000" stroke-width="1.1"><circle cx="851.4" cy="273.3" r="2.05"/><path d="M851.4,275.4 V281.6 M847.0,277.3 H855.8 M851.4,281.6 L847.1999999999999,287.8 M851.4,281.6 L855.6,287.8"/></g>
<rect x="926.5" y="266.5" width="92.0" height="40.0" rx="10" fill="#ffff99" stroke="#111" stroke-width="1.1"/>
<text x="928.5" y="276.1" font-size="13" fill="#fff" stroke="#fff" stroke-width="1.8" stroke-linejoin="round">a</text><text x="928.5" y="276.1" font-size="13" fill="#000" stroke="#000" stroke-width="0.45">a</text>
<text x="931.3" y="290.2" font-size="11" fill="#000" textLength="69.4" lengthAdjust="spacingAndGlyphs">Open Account</text>
<path d="M1001.4,275.5 L1007.5999999999999,271.2 L1013.8,275.5 V283.7 L1007.5999999999999,278.3 L1001.4,283.7 Z" fill="none" stroke="#000" stroke-width="1.15" stroke-linejoin="miter"/>
<rect x="277.5" y="356.5" width="191.0" height="40.0" rx="0" fill="#ffff99" stroke="#111" stroke-width="1.1"/>
<text x="279.5" y="366.1" font-size="13" fill="#fff" stroke="#fff" stroke-width="1.8" stroke-linejoin="round">a</text><text x="279.5" y="366.1" font-size="13" fill="#000" stroke="#000" stroke-width="0.45">a</text>
<text x="281.2" y="380" font-size="11" fill="#000" textLength="164.0" lengthAdjust="spacingAndGlyphs">Customer Service Representative</text>
<rect x="445.2" y="361.4" width="18.600000000000023" height="8.200000000000045" rx="4.100000000000023" fill="none" stroke="#000" stroke-width="1.15"/><ellipse cx="460.6" cy="365.5" rx="3.2" ry="4.100000000000023" fill="none" stroke="#000" stroke-width="1.15"/>
<rect x="545.5" y="356.5" width="134.0" height="40.0" rx="10" fill="#ffff99" stroke="#111" stroke-width="1.1"/>
<text x="547.5" y="366.1" font-size="13" fill="#fff" stroke="#fff" stroke-width="1.8" stroke-linejoin="round">a</text><text x="547.5" y="366.1" font-size="13" fill="#000" stroke="#000" stroke-width="0.45">a</text>
<text x="550.1" y="380" font-size="11" fill="#000" textLength="110.8" lengthAdjust="spacingAndGlyphs">Fund Transfer Process</text>
<path d="M662.2,364.25 H670.6 V361.0 L676.9,367.3 L670.6,373.6 V370.35 H662.2 Z" fill="none" stroke="#000" stroke-width="1.15"/>
<rect x="752.5" y="356.5" width="80.0" height="40.0" rx="0" fill="#ffff99" stroke="#111" stroke-width="1.1"/>
<text x="754.5" y="366.1" font-size="13" fill="#fff" stroke="#fff" stroke-width="1.8" stroke-linejoin="round">a</text><text x="754.5" y="366.1" font-size="13" fill="#000" stroke="#000" stroke-width="0.45">a</text>
<text x="771.0" y="380" font-size="11" fill="#000" textLength="25.2" lengthAdjust="spacingAndGlyphs">Bank</text>
<g fill="none" stroke="#000" stroke-width="1.1"><circle cx="821.4" cy="363.3" r="2.05"/><path d="M821.4,365.4 V371.6 M817.0,367.3 H825.8 M821.4,371.6 L817.1999999999999,377.8 M821.4,371.6 L825.6,377.8"/></g>
<rect x="897.5" y="356.5" width="150.0" height="40.0" rx="10" fill="#ffff99" stroke="#111" stroke-width="1.1"/>
<text x="899.5" y="366.1" font-size="13" fill="#fff" stroke="#fff" stroke-width="1.8" stroke-linejoin="round">a</text><text x="899.5" y="366.1" font-size="13" fill="#000" stroke="#000" stroke-width="0.45">a</text>
<text x="900.8" y="380" font-size="11" fill="#000" textLength="127.4" lengthAdjust="spacingAndGlyphs">Account Opening Process</text>
<path d="M1030.2,364.25 H1038.6 V361.0 L1044.9,367.3 L1038.6,373.6 V370.35 H1030.2 Z" fill="none" stroke="#000" stroke-width="1.15"/>
<rect x="918.5" y="446.5" width="108.0" height="40.0" rx="0" fill="#ffff99" stroke="#111" stroke-width="1.1"/>
<text x="920.5" y="456.1" font-size="13" fill="#fff" stroke="#fff" stroke-width="1.8" stroke-linejoin="round">a</text><text x="920.5" y="456.1" font-size="13" fill="#000" stroke="#000" stroke-width="0.45">a</text>
<text x="922.0" y="470" font-size="11" fill="#000" textLength="81.5" lengthAdjust="spacingAndGlyphs">Branch Manager</text>
<rect x="1003.2" y="451.4" width="18.59999999999991" height="8.200000000000045" rx="4.100000000000023" fill="none" stroke="#000" stroke-width="1.15"/><ellipse cx="1018.5999999999999" cy="455.5" rx="3.2" ry="4.100000000000023" fill="none" stroke="#000" stroke-width="1.15"/>
<circle cx="752.4" cy="376.5" r="2.8" fill="#000"/><circle cx="832.8" cy="376.5" r="2.8" fill="#000"/>
<text x="261.0" y="167.6" font-size="11" fill="#000" textLength="43.1" lengthAdjust="spacingAndGlyphs">Business</text>
<text x="259.8" y="165.8" font-size="11.5" font-weight="bold" fill="#000" stroke="#fff" stroke-width="1" paint-order="stroke">a</text>
</svg>
</div>
</body>
</html>
